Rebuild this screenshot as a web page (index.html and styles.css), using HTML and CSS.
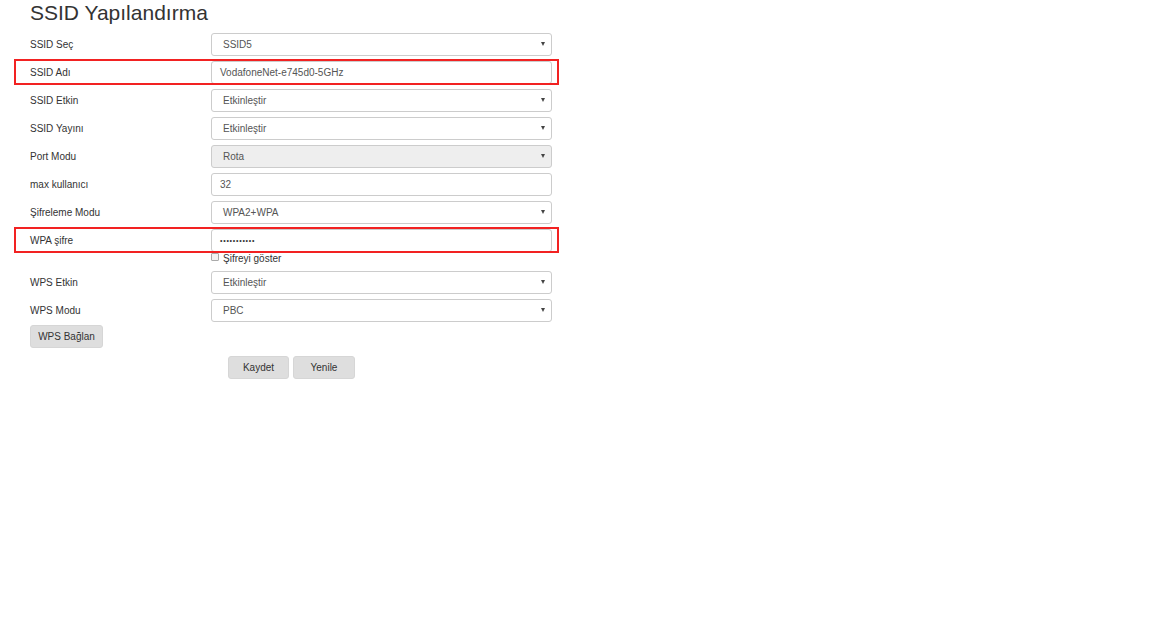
FILE: index.html
```html
<!DOCTYPE html>
<html lang="tr">
<head>
<meta charset="utf-8">
<title>SSID Yapılandırma</title>
<link rel="stylesheet" href="styles.css">
</head>
<body>
<div class="page">
  <h1 class="title">SSID Yapılandırma</h1>
  <div class="form">
    <div class="row">
      <span class="label">SSID Seç</span>
      <div class="control select"><span>SSID5</span><i class="caret"></i></div>
    </div>
    <div class="row marked">
      <span class="label">SSID Adı</span>
      <div class="control input"><span>VodafoneNet-e745d0-5GHz</span></div>
    </div>
    <div class="row">
      <span class="label">SSID Etkin</span>
      <div class="control select"><span>Etkinleştir</span><i class="caret"></i></div>
    </div>
    <div class="row">
      <span class="label">SSID Yayını</span>
      <div class="control select"><span>Etkinleştir</span><i class="caret"></i></div>
    </div>
    <div class="row">
      <span class="label">Port Modu</span>
      <div class="control select disabled"><span>Rota</span><i class="caret"></i></div>
    </div>
    <div class="row">
      <span class="label">max kullanıcı</span>
      <div class="control input"><span>32</span></div>
    </div>
    <div class="row">
      <span class="label">Şifreleme Modu</span>
      <div class="control select"><span>WPA2+WPA</span><i class="caret"></i></div>
    </div>
    <div class="row marked">
      <span class="label">WPA şifre</span>
      <div class="control input"><span class="dots">•••••••••••</span></div>
    </div>
    <div class="check-row">
      <span class="box"></span><span class="check-label">Şifreyi göster</span>
    </div>
    <div class="row">
      <span class="label">WPS Etkin</span>
      <div class="control select"><span>Etkinleştir</span><i class="caret"></i></div>
    </div>
    <div class="row">
      <span class="label">WPS Modu</span>
      <div class="control select"><span>PBC</span><i class="caret"></i></div>
    </div>
    <div class="wps-row">
      <button class="btn btn-wps">WPS Bağlan</button>
    </div>
    <div class="actions">
      <button class="btn btn-save">Kaydet</button>
      <button class="btn btn-reset">Yenile</button>
    </div>
  </div>
</div>
</body>
</html>
```
FILE: styles.css
```css
html, body {
  margin: 0;
  padding: 0;
  background: #fff;
}
body {
  font-family: "Liberation Sans", Arial, sans-serif;
  color: #333;
}
.page {
  padding-left: 30px;
  width: 522px;
}
.title {
  margin: 0;
  padding-top: 1px;
  height: 29px;
  font-size: 21px;
  line-height: 24px;
  font-weight: normal;
  color: #333;
}
.form {
  display: flex;
  flex-direction: column;
}
.row {
  position: relative;
  display: grid;
  grid-template-columns: 181px 341px;
  align-items: center;
  height: 28px;
}
.row.marked::after {
  content: "";
  position: absolute;
  left: -16px;
  right: -7px;
  top: 1px;
  bottom: 1px;
  border: 2px solid #f22222;
  pointer-events: none;
}
.label {
  font-size: 10px;
  color: #333;
  padding-top: 1px;
}
.control {
  box-sizing: border-box;
  height: 23px;
  border: 1px solid #ccc;
  border-radius: 3px;
  background: #fff;
  display: flex;
  align-items: center;
  font-size: 10px;
  color: #555;
}
.select {
  padding: 0 6px 0 11px;
  justify-content: space-between;
}
.input {
  padding: 0 8px;
}
.disabled {
  background: #eee;
}
.caret {
  width: 0;
  height: 0;
  border-left: 2.5px solid transparent;
  border-right: 2.5px solid transparent;
  border-top: 4px solid #444;
}
.dots {
  font-size: 7px;
  letter-spacing: 0.75px;
  color: #333;
}
.check-row {
  height: 14px;
  padding-left: 181px;
  display: flex;
  align-items: flex-start;
  gap: 4px;
}
.box {
  box-sizing: border-box;
  width: 8px;
  height: 8px;
  border: 1px solid #aaa;
  border-radius: 1px;
  background: #f3f3f3;
  margin-top: -1px;
}
.check-label {
  font-size: 10px;
  line-height: 12px;
  color: #333;
  margin-top: -1px;
}
.wps-row {
  padding-top: 1px;
  display: flex;
}
.btn {
  box-sizing: border-box;
  height: 23px;
  border: 1px solid #d6d6d6;
  border-radius: 3px;
  background: #dedede;
  font-family: "Liberation Sans", Arial, sans-serif;
  font-size: 10px;
  color: #333;
  padding: 0;
}
.btn-wps {
  width: 73px;
}
.actions {
  display: flex;
  gap: 4px;
  padding-left: 198px;
  margin-top: 8px;
}
.btn-save {
  width: 61px;
}
.btn-reset {
  width: 62px;
}
```
